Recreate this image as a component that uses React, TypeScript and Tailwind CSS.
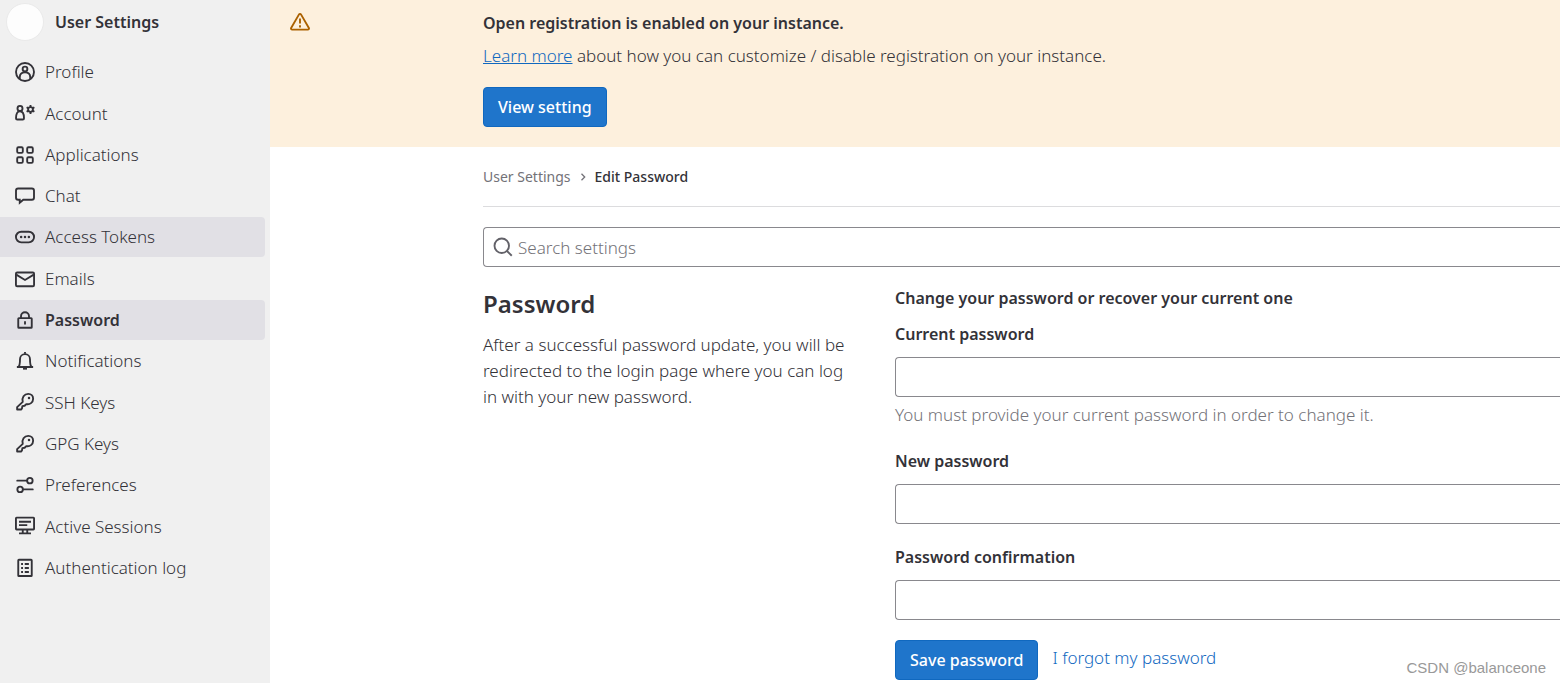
import type { ReactNode } from "react";
import clsx from "clsx";

function Icon({ children, className }: { children: ReactNode; className?: string }) {
  return (
    <svg
      viewBox="0 0 16 16"
      fill="none"
      stroke="currentColor"
      strokeWidth="1.5"
      aria-hidden="true"
      className={clsx("w-5 h-5 shrink-0", className)}
    >
      {children}
    </svg>
  );
}

const keyIcon = (
  <>
    <path
      strokeLinejoin="round"
      d="M6.2 7.9C5.3 4.6 7.3 1.5 10.6 1.5c2.2 0 3.9 1.7 3.9 3.9 0 3-2.6 4.9-5.5 4.3L7.7 11 5.9 11.3 5.6 13 5 14H1.7v-1.9z"
    />
    <circle cx="11.2" cy="4.8" r="1" fill="currentColor" stroke="none" />
  </>
);

const navItems: { label: string; icon: ReactNode; hovered?: boolean; active?: boolean }[] = [
  {
    label: "Profile",
    icon: (
      <>
        <circle cx="8" cy="8" r="7.2" />
        <circle cx="8" cy="5.6" r="1.9" />
        <path d="M3.8 13.5v-1.2C3.8 9.8 5.6 8.3 8 8.3s4.2 1.5 4.2 4v1.2" />
      </>
    ),
  },
  {
    label: "Account",
    icon: (
      <>
        <circle cx="4" cy="4.3" r="2" />
        <path strokeLinejoin="round" d="M.8 12.2c0-3.4 1-5.600 3.2-5.600s3.2 2.200 3.2 5.600c0 .7-.4 1-1 1H1.8c-.6 0-1-.3-1-1z" />
        <circle cx="12.4" cy="5.2" r="1.9" />
        <path d="M12.4 1.6v1.8M12.4 7v1.8M9.3 3.4l1.5.9M14 6.1l1.5.9M15.5 3.4l-1.5.9M10.8 6.1l-1.5.9" />
      </>
    ),
  },
  {
    label: "Applications",
    icon: (
      <>
        <rect x="1.75" y="1.75" width="4.5" height="4.5" rx="1" />
        <rect x="9.75" y="1.75" width="4.5" height="4.5" rx="1" />
        <rect x="1.75" y="9.75" width="4.5" height="4.5" rx="1" />
        <rect x="9.75" y="9.75" width="4.5" height="4.5" rx="1" />
      </>
    ),
  },
  {
    label: "Chat",
    icon: (
      <path d="M2.5 2h11c1 0 1.7.8 1.7 1.8v5.4c0 1-.7 1.8-1.7 1.8H6.6L3.8 13.4V11H2.5C1.5 11 .8 10.2.8 9.2V3.8C.8 2.800 1.5 2 2.5 2z" />
    ),
  },
  {
    label: "Access Tokens",
    hovered: true,
    icon: (
      <>
        <rect x=".75" y="3.75" width="14.5" height="8.5" rx="4.25" />
        <g fill="currentColor" stroke="none">
          <circle cx="4.9" cy="8" r="1" />
          <circle cx="8" cy="8" r="1" />
          <circle cx="11.1" cy="8" r="1" />
        </g>
      </>
    ),
  },
  {
    label: "Emails",
    icon: (
      <>
        <rect x=".75" y="2.75" width="14.5" height="11" rx="1" />
        <path d="M1 4.5l7 4.3 7-4.3" />
      </>
    ),
  },
  {
    label: "Password",
    active: true,
    icon: (
      <>
        <rect x="2.6" y="6.5" width="10.8" height="7.7" rx=".5" />
        <path d="M4.8 6.5V5a3.2 3.2 0 0 1 6.4 0v1.5M8 9v2.6" />
      </>
    ),
  },
  {
    label: "Notifications",
    icon: (
      <>
        <path d="M1.5 12.8h13M2.8 12.5C4 11.5 4 10 4 6.500a4 4 0 0 1 8 0c0 3.500 0 5 1.200 6" />
        <path strokeWidth="1.8" d="M6.4 14h3.2" />
        <path d="M8 .8v1.4" />
      </>
    ),
  },
  { label: "SSH Keys", icon: keyIcon },
  { label: "GPG Keys", icon: keyIcon },
  {
    label: "Preferences",
    icon: (
      <>
        <circle cx="11.9" cy="4.5" r="2.2" />
        <circle cx="4.1" cy="11.5" r="2.2" />
        <path strokeLinecap="round" d="M1.800 4.500h7.500M6.700 11.500h7.500" />
      </>
    ),
  },
  {
    label: "Active Sessions",
    icon: (
      <>
        <rect x=".75" y="1.25" width="14.5" height="9.5" rx=".5" />
        <path d="M3.200 4.600h9.600M3.200 7.300h6.600M6.200 11v2.700M9.800 11v2.700M3.200 13.900h9.600" />
      </>
    ),
  },
  {
    label: "Authentication log",
    icon: (
      <>
        <rect x="2.6" y="1.4" width="10.8" height="13" rx=".5" />
        <path d="M4.900 4.800h1.500M4.900 8h1.500M4.900 11.200h1.500M7.800 4.800h3.300M7.800 8h3.300M7.800 11.200h3.300" />
      </>
    ),
  },
];

const inputClass = "block w-full h-10 rounded-l border border-r-0 border-[#89888d] bg-white px-3 outline-none";
const buttonClass =
  "h-10 rounded border border-[#1068bf] bg-[#1f75cb] px-3.5 text-base text-white font-medium whitespace-nowrap";
const headingClass = "text-base font-semibold leading-[26px]";

function Sidebar() {
  return (
    <aside className="w-[270px] shrink-0 bg-[#f0f0f0] pr-[5px]">
      <div className="flex items-center gap-[11px] h-[52px] pl-1.5 pb-2">
        <span className="w-[38px] h-[38px] rounded-full bg-[#fdfdfd] border border-[#eaeaea]" />
        <span className="text-base font-semibold">User Settings</span>
      </div>
      <nav aria-label="User settings">
        <ul className="grid auto-rows-fr min-h-[537px]">
          {navItems.map((item) => (
            <li key={item.label}>
              <a
                href="#"
                aria-current={item.active ? "page" : undefined}
                className={clsx(
                  "flex items-center gap-2.5 h-10 pl-[15px] rounded-r",
                  (item.hovered || item.active) && "bg-[#e1e0e5]",
                  item.active && "text-base font-semibold",
                )}
              >
                <Icon>{item.icon}</Icon>
                {item.label}
              </a>
            </li>
          ))}
        </ul>
      </nav>
    </aside>
  );
}

function Banner() {
  return (
    <section className="flex bg-[#fdf0dd] pt-2.5 pb-5 pl-5 pr-4">
      <Icon className="text-[#ab6100] mt-0.5">
        <path strokeLinejoin="round" d="M7.1 2.1.9 12.8c-.3.6.1 1.3.8 1.3h12.6c.7 0 1.1-.7.8-1.3L8.9 2.1c-.4-.7-1.4-.7-1.800 0z" />
        <path d="M8 5.2v4M8 10.6v1.7" />
      </Icon>
      <div className="ml-[173px]">
        <h2 className={headingClass}>Open registration is enabled on your instance.</h2>
        <p className="mt-[7px] leading-[26px]">
          <a href="#" className="text-[#1068bf] underline">
            Learn more
          </a>{" "}
          about how you can customize / disable registration on your instance.
        </p>
        <button type="button" className={clsx(buttonClass, "mt-[18px]")}>
          View setting
        </button>
      </div>
    </section>
  );
}

function PasswordField({ id, label, help }: { id: string; label: string; help?: string }) {
  return (
    <div>
      <label htmlFor={id} className={clsx(headingClass, "block mb-2.5")}>
        {label}
      </label>
      <input id={id} type="password" className={inputClass} />
      {help && <p className="mt-[5px] leading-[26px] text-[#737278]">{help}</p>}
    </div>
  );
}

export default function App() {
  return (
    <div className="relative flex min-h-screen overflow-hidden bg-white font-['Noto_Sans',sans-serif] font-light text-[17px] text-[#333238]">
      <Sidebar />
      <main className="flex-1 min-w-0">
        <Banner />
        <div className="pl-[213px]">
          <nav
            aria-label="Breadcrumb"
            className="flex items-center gap-2 h-[60px] text-sm font-normal border-b border-[#dcdcde]"
          >
            <a href="#" className="text-[#737278]">
              User Settings
            </a>
            <svg viewBox="0 0 8 8" fill="none" stroke="#737278" strokeWidth="1.3" className="w-2 h-2" aria-hidden="true">
              <path d="M2.5.8 5.7 4 2.5 7.2" />
            </svg>
            <a href="#" className="font-medium">
              Edit Password
            </a>
          </nav>

          <div className="relative mt-5">
            <svg
              viewBox="0 0 16 16"
              fill="none"
              stroke="#626168"
              strokeWidth="1.5"
              className="absolute left-2.5 top-2.5 w-5 h-5"
              aria-hidden="true"
            >
              <circle cx="7" cy="7" r="5.8" />
              <path d="M11.2 11.2l3.8 3.8" />
            </svg>
            <input
              type="search"
              aria-label="Search settings"
              placeholder="Search settings"
              className={clsx(inputClass, "pl-[34px] placeholder:text-[#737278]")}
            />
          </div>

          <div className="grid grid-cols-[412px_1fr] mt-[18px]">
            <div className="pt-[3px] pr-10">
              <h1 className="text-2xl font-semibold">Password</h1>
              <p className="mt-3 leading-[26px]">
                After a successful password update, you will be redirected to the login page where you can log in with
                your new password.
              </p>
            </div>
            <form onSubmit={(e) => e.preventDefault()}>
              <h2 className={clsx(headingClass, "mb-2.5")}>Change your password or recover your current one</h2>
              <div className="flex flex-col gap-5">
                <PasswordField
                  id="current-password"
                  label="Current password"
                  help="You must provide your current password in order to change it."
                />
                <PasswordField id="new-password" label="New password" />
                <PasswordField id="password-confirmation" label="Password confirmation" />
                <div className="flex items-center gap-3.5">
                  <button type="submit" className={buttonClass}>
                    Save password
                  </button>
                  <a href="#" className="text-[#1068bf] pb-1">
                    I forgot my password
                  </a>
                </div>
              </div>
            </form>
          </div>
        </div>
      </main>
      <span className="absolute right-3.5 bottom-1 font-['Liberation_Sans',sans-serif] font-normal text-[15px] text-[#999999]">
        CSDN @balanceone
      </span>
    </div>
  );
}
